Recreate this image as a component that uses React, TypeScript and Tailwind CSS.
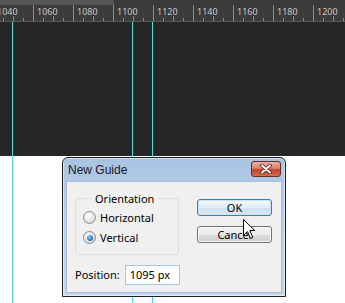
import React from "react";

const majors = [1040, 1060, 1080, 1100, 1120, 1140, 1160, 1180, 1200];
const guides = [12, 132, 152];

function Ruler() {
  const ticks: { x: number; h: number }[] = [];
  for (let x = -7; x < 345; x += 10) {
    const step = Math.round((x + 7) / 10) % 4;
    ticks.push({ x, h: step === 0 ? 16 : step === 2 ? 5 : 3 });
  }
  return (
    <div className="relative h-[17px] bg-[#3b3b3b] border-b border-[#585858] overflow-hidden">
      {ticks.map((t) => (
        <div
          key={t.x}
          className="absolute bottom-0 w-px bg-[#8a8a8a]"
          style={{ left: t.x, height: t.h }}
        />
      ))}
      {majors.map((m, i) => (
        <span
          key={m}
          className="absolute top-[1px] text-[9px] leading-[12px] text-[#c9c9c9]"
          style={{ left: -3 + i * 40 }}
        >
          {m}
        </span>
      ))}
    </div>
  );
}

function Radio({ checked }: { checked?: boolean }) {
  return (
    <span className="w-[13px] h-[13px] rounded-full border border-[#8b8b8b] bg-[radial-gradient(circle_at_40%_35%,#ffffff,#dcdcdc_70%,#c4c4c4)] flex items-center justify-center shrink-0">
      {checked && (
        <span className="w-[6px] h-[6px] rounded-full bg-[radial-gradient(circle_at_40%_35%,#8fd0ff,#1f6fb8_70%,#0d4a85)]" />
      )}
    </span>
  );
}

function Cursor() {
  return (
    <svg
      className="absolute left-[243px] top-[219px]"
      width="13"
      height="21"
      viewBox="0 0 13 21"
    >
      <path
        d="M0.5 0.5 L0.5 16.5 L4.5 12.5 L7.5 19.5 L9.8 18.5 L6.8 11.5 L11.8 11.5 Z"
        fill="#ffffff"
        stroke="#000000"
        strokeWidth="1"
        strokeLinejoin="round"
      />
    </svg>
  );
}

function Dialog() {
  return (
    <div className="absolute left-[62px] top-[157px] w-[224px] h-[140px] rounded-t-[6px] border border-[#1e1e1e] bg-[linear-gradient(#a9c3e2,#b7cfea_40%,#c3d8ee)] flex flex-col shadow-[inset_0_0_0_1px_rgba(255,255,255,0.5)]">
      <div className="h-[23px] flex items-center justify-between pl-[5px] pr-[4px]">
        <span className="text-[12px] text-[#1a1a1a] font-['Liberation_Sans',sans-serif]">
          New Guide
        </span>
        <button className="w-[30px] h-[16px] rounded-[3px] border border-[#6b2b1f] bg-[linear-gradient(#eab0a3,#d8826d_45%,#c0442a_55%,#d46a4f)] flex items-center justify-center mt-[-2px]">
          <svg width="14" height="10" viewBox="0 0 14 10">
            <path d="M3 1.5 L11 8.5 M11 1.5 L3 8.5" stroke="#5a2016" strokeWidth="3.6" strokeLinecap="round" />
            <path d="M3 1.5 L11 8.5 M11 1.5 L3 8.5" stroke="#ffffff" strokeWidth="2" strokeLinecap="round" />
          </svg>
        </button>
      </div>
      <div className="flex-1 mx-[3px] mb-[3px] bg-[#f0f0f0] border border-[#a8bdd6] text-[11px] text-black">
        <div className="flex pl-[8px] pt-[9px]">
          <fieldset className="w-[104px] h-[64px] border border-[#d5dfe5] rounded-[3px] px-0 m-0">
            <legend className="ml-[15px] px-[4px] leading-[15px]">Orientation</legend>
            <div className="flex flex-col gap-[7px] pl-[7px] pt-[5px]">
              <label className="flex items-center gap-[4px] leading-[13px]">
                <Radio />
                Horizontal
              </label>
              <label className="flex items-center gap-[4px] leading-[13px]">
                <Radio checked />
                Vertical
              </label>
            </div>
          </fieldset>
          <div className="flex flex-col ml-[18px] mt-[8px] gap-[10px]">
            <button className="w-[75px] h-[17px] rounded-[3px] border border-[#3c7fb1] bg-[linear-gradient(#f4f9fd,#e1ecf6_50%,#cfdfee_51%,#dbe7f2)] shadow-[inset_0_0_0_1px_#c6e3f7] leading-[15px]">
              OK
            </button>
            <button className="w-[75px] h-[17px] rounded-[3px] border border-[#707070] bg-[linear-gradient(#f2f2f2,#ebebeb_50%,#dddddd_51%,#cfcfcf)] shadow-[inset_0_0_0_1px_#fbfbfb] leading-[15px]">
              Cancel
            </button>
          </div>
        </div>
        <div className="flex items-center pl-[8px] mt-[10px] gap-[5px]">
          <span>Position:</span>
          <div className="w-[55px] h-[20px] border border-[#a9c6e4] bg-white px-[4px] leading-[18px]">
            1095 px
          </div>
        </div>
      </div>
    </div>
  );
}

export default function App() {
  return (
    <div className="relative w-[345px] h-[303px] overflow-hidden bg-white font-['Noto_Sans',sans-serif]">
      <div className="flex h-[5px]">
        <div className="w-[114px] bg-[#575757]" />
        <div className="flex-1 bg-[#3a3a3a]" />
      </div>
      <Ruler />
      <div className="h-[134px] bg-[#262626]" />
      {guides.map((g) => (
        <div
          key={g}
          className="absolute top-[22px] bottom-0 w-px bg-[#3fe0df]"
          style={{ left: g }}
        />
      ))}
      <Dialog />
      <Cursor />
    </div>
  );
}
